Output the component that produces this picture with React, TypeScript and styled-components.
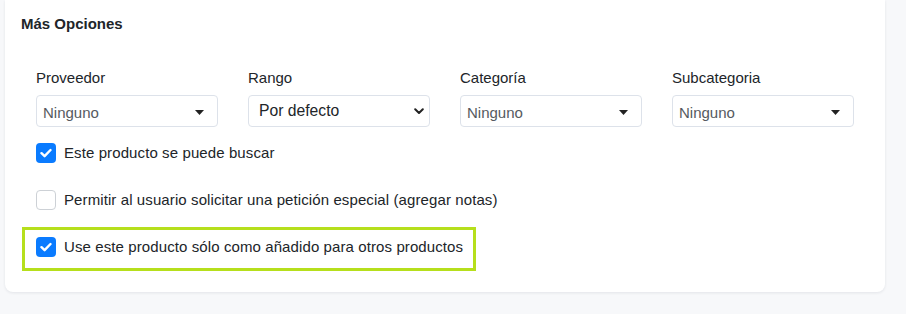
import React from "react";
import styled, { createGlobalStyle } from "styled-components";

const Global = createGlobalStyle`
  html, body { margin: 0; padding: 0; }
  body {
    background: #f7f8fa;
    font-family: "Liberation Sans", Arial, sans-serif;
    color: #212529;
    width: 906px;
    height: 314px;
    overflow: hidden;
  }
`;

const Page = styled.div`
  padding: 0 21px 0 5px;
`;

const Card = styled.section`
  background: #ffffff;
  border-radius: 0 0 8px 8px;
  box-shadow: 0 1px 3px rgba(20, 30, 50, 0.09);
  padding: 15px 16px 21px 16px;
`;

const Title = styled.h3`
  margin: 0;
  font-size: 15px;
  line-height: 17px;
  font-weight: 700;
  color: #212529;
`;

const FieldsRow = styled.div`
  display: grid;
  grid-template-columns: repeat(4, 212px);
  margin-top: 37px;
`;

const Field = styled.div`
  padding: 0 15px;
  display: flex;
  flex-direction: column;
`;

const Label = styled.label`
  font-size: 15px;
  line-height: 17px;
  color: #212529;
  margin-bottom: 9px;
`;

const SelectBox = styled.div<{ $native?: boolean }>`
  height: 32px;
  box-sizing: border-box;
  border: 1px solid #dde2ea;
  border-radius: 4px;
  display: flex;
  align-items: center;
  justify-content: space-between;
  padding: ${(p) => (p.$native ? "0 5px 0 10px" : "2px 13px 0 6px")};
  font-size: ${(p) => (p.$native ? "15.7px" : "15px")};
  color: ${(p) => (p.$native ? "#212529" : "#555a60")};
  background: #fff;
`;

const CheckList = styled.div`
  display: flex;
  flex-direction: column;
  align-items: flex-start;
  margin-top: 16px;
`;

const CheckRow = styled.div<{ $after: number }>`
  display: flex;
  align-items: center;
  height: 20px;
  padding-left: 15px;
  margin-bottom: ${(p) => p.$after}px;
  font-size: 15px;
  color: #212529;
`;

const Highlight = styled.div`
  display: flex;
  align-items: flex-start;
  border: 3px solid #b6df1c;
  padding: 7px 10px 11px 11px;
  margin-left: 1px;
  font-size: 15px;
  color: #212529;
`;

const Box = styled.span<{ $checked: boolean }>`
  width: 20px;
  height: 20px;
  box-sizing: border-box;
  border-radius: 4px;
  flex: none;
  display: inline-flex;
  align-items: center;
  justify-content: center;
  margin-right: 8px;
  background: ${(p) => (p.$checked ? "#0a7bff" : "#fff")};
  border: ${(p) => (p.$checked ? "none" : "1px solid #cdd1d6")};
`;

const CheckText = styled.span`
  line-height: 20px;
  letter-spacing: 0.1px;
`;

const Caret = () => (
  <svg width="9" height="5" viewBox="0 0 9 5">
    <path d="M0 0 H9 L4.5 5 Z" fill="#222" />
  </svg>
);

const Chevron = () => (
  <svg width="10" height="7" viewBox="0 0 10 7">
    <path d="M1.2 1.2 L5 5 L8.8 1.2" fill="none" stroke="#222" strokeWidth="2" strokeLinecap="round" strokeLinejoin="round" />
  </svg>
);

const Check = ({ checked }: { checked: boolean }) => (
  <Box $checked={checked}>
    {checked && (
      <svg width="12" height="10" viewBox="0 0 12 10">
        <path d="M1.5 5.2 L4.6 8.2 L10.5 2" fill="none" stroke="#fff" strokeWidth="2.4" strokeLinecap="round" strokeLinejoin="round" />
      </svg>
    )}
  </Box>
);

const fields = [
  { label: "Proveedor", value: "Ninguno", native: false },
  { label: "Rango", value: "Por defecto", native: true },
  { label: "Categoría", value: "Ninguno", native: false },
  { label: "Subcategoria", value: "Ninguno", native: false },
];

export default function App() {
  return (
    <>
      <Global />
      <Page>
        <Card>
          <Title>Más Opciones</Title>
          <FieldsRow>
            {fields.map((f) => (
              <Field key={f.label}>
                <Label>{f.label}</Label>
                <SelectBox $native={f.native}>
                  <span>{f.value}</span>
                  {f.native ? <Chevron /> : <Caret />}
                </SelectBox>
              </Field>
            ))}
          </FieldsRow>
          <CheckList>
            <CheckRow $after={27}>
              <Check checked />
              <CheckText>Este producto se puede buscar</CheckText>
            </CheckRow>
            <CheckRow $after={17}>
              <Check checked={false} />
              <CheckText>Permitir al usuario solicitar una petición especial (agregar notas)</CheckText>
            </CheckRow>
            <Highlight>
              <Check checked />
              <CheckText>Use este producto sólo como añadido para otros productos</CheckText>
            </Highlight>
          </CheckList>
        </Card>
      </Page>
    </>
  );
}
